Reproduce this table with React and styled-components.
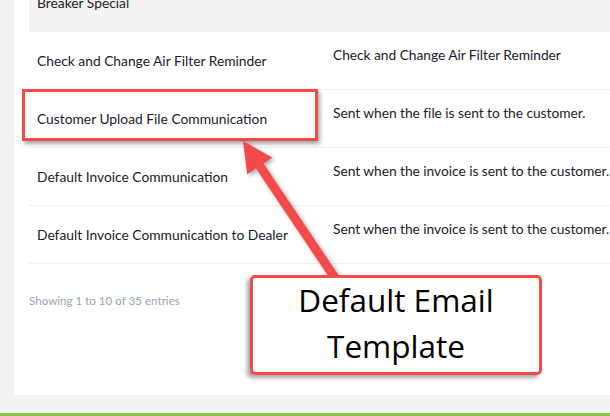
import React from "react";
import styled, { createGlobalStyle } from "styled-components";

const Global = createGlobalStyle`
  html, body { margin: 0; padding: 0; overflow: hidden; background: #f3f3f3; }
  body { font-family: Lato, "Open Sans", sans-serif; }
`;

const Page = styled.div`
  position: relative;
  width: 610px;
  height: 416px;
  overflow: hidden;
  display: flex;
  flex-direction: column;
`;

const Card = styled.div`
  margin: -26px 0 18px 14px;
  width: 720px;
  background: #fff;
  padding: 0 15px 0 15px;
  height: 421px;
  box-sizing: border-box;
`;

const Row = styled.div`
  display: grid;
  grid-template-columns: 296px 1fr;
  height: 58px;
  box-sizing: border-box;
  border-bottom: 1px solid ${(p) => (p.$striped ? "#f3f3f3" : "#edf0f4")};
  background: ${(p) => (p.$striped ? "#f3f3f3" : "#fff")};
  font-size: 13.8px;
  color: #1b1b2a;
`;

const NameCell = styled.div`
  display: flex;
  align-items: center;
  padding-left: 8px;
  white-space: nowrap;
`;

const DescCell = styled.div`
  padding: 14px 0 0 8px;
  line-height: 17px;
  white-space: nowrap;
  letter-spacing: -0.05px;
`;

const Info = styled.div`
  padding-top: 30px;
  font-size: 11.6px;
  color: #98a6b8;
`;

const GreenBar = styled.div`
  height: 3px;
  background: #8bc34a;
  margin-top: auto;
`;

const Highlight = styled.div`
  position: absolute;
  left: 22px;
  top: 89px;
  width: 296px;
  height: 52px;
  box-sizing: border-box;
  border: 3px solid #f44a4a;
  box-shadow: 2px 3px 4px rgba(0, 0, 0, 0.35);
`;

const Arrow = styled.svg`
  position: absolute;
  left: 0;
  top: 0;
  width: 610px;
  height: 416px;
  filter: drop-shadow(2px 2px 2px rgba(0, 0, 0, 0.35));
`;

const Callout = styled.div`
  position: absolute;
  left: 250px;
  top: 275px;
  width: 292px;
  height: 100px;
  box-sizing: border-box;
  padding-bottom: 4px;
  border: 3px solid #f44a4a;
  border-radius: 5px;
  background: #fff;
  box-shadow: -3px 3px 4px rgba(0, 0, 0, 0.35);
  display: flex;
  align-items: center;
  justify-content: center;
  text-align: center;
  font-family: "Open Sans", Lato, sans-serif;
  font-size: 31.5px;
  line-height: 46px;
  color: #000;
`;

const rows = [
  { name: "Breaker Special", desc: "", striped: true },
  { name: "Check and Change Air Filter Reminder", desc: "Check and Change Air Filter Reminder" },
  { name: "Customer Upload File Communication", desc: "Sent when the file is sent to the customer." },
  { name: "Default Invoice Communication", desc: "Sent when the invoice is sent to the customer." },
  { name: "Default Invoice Communication to Dealer", desc: "Sent when the invoice is sent to the customer." },
];

export default function App() {
  return (
    <Page>
      <Global />
      <Card>
        {rows.map((r) => (
          <Row key={r.name} $striped={r.striped}>
            <NameCell>{r.name}</NameCell>
            <DescCell>{r.desc}</DescCell>
          </Row>
        ))}
        <Info>Showing 1 to 10 of 35 entries</Info>
      </Card>
      <GreenBar />
      <Highlight />
      <Arrow viewBox="0 0 610 416">
        <polygon
          fill="#f44a4a"
          points="243,141 272.2,157.5 263.4,163.4 338.7,275.5 331.3,280.5 256,168.4 247.2,174.3"
        />
      </Arrow>
      <Callout>
        Default Email
        <br />
        Template
      </Callout>
    </Page>
  );
}
